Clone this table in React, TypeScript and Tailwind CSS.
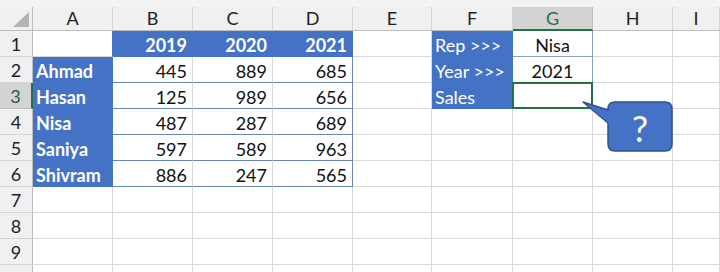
import React from "react";

type Cell = {
  text?: string;
  kind?: "name" | "year" | "num" | "label" | "center" | "pick";
};

const cols = ["A", "B", "C", "D", "E", "F", "G", "H", "I"];

const reps: [string, number, number, number][] = [
  ["Ahmad", 445, 889, 685],
  ["Hasan", 125, 989, 656],
  ["Nisa", 487, 287, 689],
  ["Saniya", 597, 589, 963],
  ["Shivram", 886, 247, 565],
];

// sheet contents, row by row, columns A..I
function buildRows(): Cell[][] {
  const rows: Cell[][] = [];
  for (let r = 0; r < 10; r++) rows.push(cols.map(() => ({})));
  rows[0][1] = { text: "2019", kind: "year" };
  rows[0][2] = { text: "2020", kind: "year" };
  rows[0][3] = { text: "2021", kind: "year" };
  reps.forEach(([name, a, b, c], i) => {
    rows[i + 1][0] = { text: name, kind: "name" };
    rows[i + 1][1] = { text: String(a), kind: "num" };
    rows[i + 1][2] = { text: String(b), kind: "num" };
    rows[i + 1][3] = { text: String(c), kind: "num" };
  });
  rows[0][5] = { text: "Rep >>>", kind: "label" };
  rows[1][5] = { text: "Year >>>", kind: "label" };
  rows[2][5] = { text: "Sales", kind: "label" };
  rows[0][6] = { text: "Nisa", kind: "center" };
  rows[1][6] = { text: "2021", kind: "center" };
  rows[2][6] = { kind: "pick" };
  return rows;
}

function cellClass(cell: Cell, r: number, c: number) {
  const base = "relative flex items-center overflow-visible whitespace-nowrap text-[18px] leading-none pt-[2px] border-r border-b";
  if (cell.kind === "name")
    return `${base} bg-[#4472c4] border-[#4472c4] text-white font-bold pl-[3px]`;
  if (cell.kind === "year")
    return `${base} bg-[#4472c4] border-[#4472c4] text-white font-bold justify-end pr-[5px]`;
  if (cell.kind === "label")
    return `${base} bg-[#4472c4] border-[#4472c4] text-white pl-[3px]`;
  if (cell.kind === "num")
    return `${base} justify-end pr-[5px] text-[#111] border-b-[#6a86b8] ${c === 3 ? "border-r-[#6a86b8]" : "border-r-[#d9d9d9]"}`;
  if (cell.kind === "center")
    return `${base} justify-center text-[#111] border-[#8aa0c8]`;
  if (cell.kind === "pick")
    return `${base} border-[#d9d9d9]`;
  // row 1 column A sits above the name list, its right edge meets the header fill
  if (r === 0 && c === 0) return `${base} border-[#d9d9d9] border-r-[#4472c4]`;
  return `${base} border-[#d9d9d9]`;
}

export default function App() {
  const rows = buildRows();
  return (
    <div
      className="relative w-[720px] h-[272px] overflow-hidden bg-white text-[#222]"
      style={{ fontFamily: "Lato, 'Open Sans', sans-serif" }}
    >
      <div className="h-[7px] bg-[#f3f3f3]" />
      <div className="grid grid-cols-[33px_80px_80px_80px_80px_79px_81px_80px_80px_1fr] grid-rows-[24px_repeat(10,26px)]">
        {/* corner */}
        <div className="relative bg-[#f0f0f0] border-r border-b border-[#bdbdbd]">
          <svg className="absolute left-[12px] top-[5px]" width="18" height="16" viewBox="0 0 18 16">
            <polygon points="17,0 17,15 1,15" fill="#b4b4b4" />
          </svg>
        </div>
        {cols.map((c) =>
          c === "G" ? (
            <div
              key={c}
              className="flex items-center justify-center bg-[#d3d3d3] border-r border-[#bdbdbd] border-b-2 border-b-[#217346] text-[18px] text-[#217346]"
            >
              {c}
            </div>
          ) : (
            <div
              key={c}
              className="flex items-center justify-center bg-[#f0f0f0] border-r border-r-[#d4d4d4] border-b border-b-[#bdbdbd] text-[18px] text-[#222]"
            >
              {c}
            </div>
          )
        )}
        {rows.map((row, r) => (
          <React.Fragment key={r}>
            {r === 2 ? (
              <div className="flex items-center justify-center pt-[2px] bg-[#d3d3d3] border-r-2 border-r-[#217346] border-b border-b-[#bdbdbd] text-[18px] text-[#2a5a3e]">
                {r + 1}
              </div>
            ) : (
              <div className="flex items-center justify-center pt-[2px] bg-[#f0f0f0] border-r border-r-[#bdbdbd] border-b border-b-[#d4d4d4] text-[18px] text-[#222]">
                {r < 9 ? r + 1 : ""}
              </div>
            )}
            {row.map((cell, c) => (
              <div key={c} className={cellClass(cell, r, c)}>
                {cell.kind === "pick" && (
                  <div className="absolute left-[-1px] top-[-1px] w-[81px] h-[27px] border-2 border-[#217346]" />
                )}
                {cell.text}
              </div>
            ))}
          </React.Fragment>
        ))}
      </div>

      {/* callout shape */}
      <svg className="absolute left-[580px] top-[98px]" width="96" height="58" viewBox="0 0 96 58">
        <path
          d="M3 4 L28 12 L28 11 Q28 4 35 4 L85 4 Q92 4 92 11 L92 46 Q92 53 85 53 L35 53 Q28 53 28 46 L28 25 Z"
          fill="#4472c4"
          stroke="#2f528f"
          strokeWidth="1.5"
          strokeLinejoin="round"
        />
      </svg>
      <div className="absolute left-[608px] top-[103px] w-[64px] h-[49px] flex items-center justify-center text-white text-[36px] leading-none">
        ?
      </div>
    </div>
  );
}
